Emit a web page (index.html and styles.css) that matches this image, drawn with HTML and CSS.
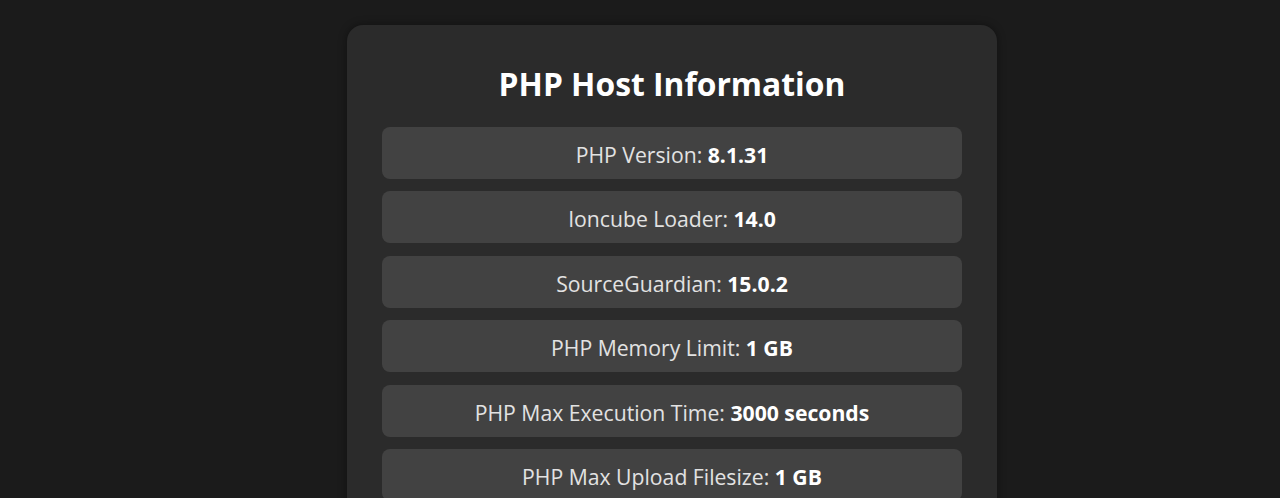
FILE: index.html
```html
<!DOCTYPE html>
<html>
	<head>
		<title>PHP Host Information</title>
		<link rel="stylesheet" href="styles.css">
	</head>
	<body>
		<div class="container">
			<h1>PHP Host Information</h1>
			<div class="info">PHP Version: <b>8.1.31</b></div>
			<div class="info">Ioncube Loader: <b>14.0</b></div>
			<div class="info">SourceGuardian: <b>15.0.2</b></div>
			<div class="info">PHP Memory Limit: <b>1 GB</b></div>
			<div class="info">PHP Max Execution Time: <b>3000 seconds</b></div>
			<div class="info">PHP Max Upload Filesize: <b>1 GB</b></div>
		</div>
	</body>
</html>
```

FILE: styles.css
```css
body {
	margin: 0;
	padding: 25px 0 25px 64px;
	background-color: #1b1b1b;
	color: #e2e2e2;
	font-family: "Open Sans", "Noto Sans", sans-serif;
}

.container {
	width: 580px;
	margin: 0 auto;
	padding: 37px 35px 30px;
	background-color: #2b2b2b;
	border-radius: 16px;
	box-shadow: 0 0 8px rgba(0, 0, 0, 0.4);
}

h1 {
	margin: 0 0 22px;
	font-size: 31.8px;
	line-height: 43px;
	text-align: center;
	color: #ffffff;
}

.info {
	margin-bottom: 12.4px;
	padding: 13px 12px 11px;
	height: 28px;
	line-height: 29px;
	font-size: 21.2px;
	text-align: center;
	background-color: #424242;
	border-radius: 8px;
}

.info b {
	color: #ffffff;
}
```
